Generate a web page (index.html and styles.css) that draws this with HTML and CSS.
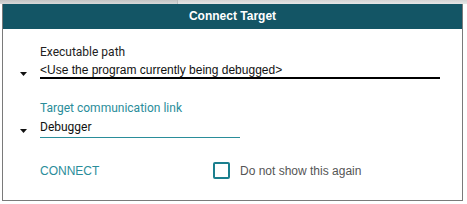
FILE: index.html
```html
<!DOCTYPE html>
<html>
<head>
<meta charset="utf-8">
<link rel="stylesheet" href="styles.css">
</head>
<body>
<div class="topstrip"><div class="tab-left"></div><div class="tab-right"></div></div>
<div class="dialog">
  <div class="header">Connect Target</div>
  <div class="content">
    <div class="field">
      <span></span>
      <div class="label">Executable path</div>
      <svg class="arrow" width="7" height="4" viewBox="0 0 7 4"><path d="M0 0H7L3.5 4Z" fill="#111"/></svg>
      <div class="input input-dark">&lt;Use the program currently being debugged&gt;</div>
    </div>
    <div class="field field2">
      <span></span>
      <div class="label label-teal">Target communication link</div>
      <svg class="arrow" width="7" height="4" viewBox="0 0 7 4"><path d="M0 0H7L3.5 4Z" fill="#111"/></svg>
      <div class="input input-teal">Debugger</div>
    </div>
    <div class="actions">
      <span class="connect">CONNECT</span>
      <span class="checkbox"></span>
      <span class="check-label">Do not show this again</span>
    </div>
  </div>
</div>
</body>
</html>
```
FILE: styles.css
```css
html, body {
  margin: 0;
  padding: 0;
  background: #ffffff;
}
body {
  width: 467px;
  height: 204px;
  overflow: hidden;
  font-family: "Liberation Sans", Arial, sans-serif;
  font-size: 12px;
}
.topstrip {
  height: 4px;
  display: flex;
}
.tab-left {
  width: 177px;
  background: linear-gradient(#c4c4c4, #d8d8d8);
  border-right: 1px solid #bdbdbd;
}
.tab-right {
  flex: 1;
  background: linear-gradient(#d4d4d4, #e6e6e6);
}
.dialog {
  margin-left: 2px;
  width: 459px;
  height: 196px;
  border: 1px solid #7a7a7a;
  border-top: none;
  background: #fff;
}
.header {
  height: 25px;
  background: #135565;
  color: #fff;
  text-align: center;
  line-height: 25px;
  font-size: 12px;
  font-weight: bold;
}
.content {
  padding: 16px 0 0 17px;
}
.field {
  display: grid;
  grid-template-columns: 20px auto;
  row-gap: 4px;
  width: 420px;
}
.field2 {
  width: 220px;
  margin-top: 22px;
  row-gap: 5px;
}
.label {
  font-family: Roboto, "Liberation Sans", sans-serif;
  line-height: 14px;
  color: #222;
}
.label-teal {
  color: #2a8d9a;
}
.arrow {
  display: block;
  margin-top: 9px;
}
.input {
  line-height: 14px;
  color: #111;
}
.input-dark {
  border-bottom: 2px solid #000;
}
.input-teal {
  font-family: Roboto, "Liberation Sans", sans-serif;
  border-bottom: 1px solid #2a8d9a;
  padding-bottom: 3px;
}
.actions {
  display: flex;
  align-items: center;
  margin-top: 24px;
  padding-left: 20px;
}
.connect {
  color: #2a8d9a;
  line-height: 14px;
  width: 173px;
}
.checkbox {
  box-sizing: border-box;
  width: 17px;
  height: 17px;
  border: 2px solid #1b7f8e;
  border-radius: 2px;
}
.check-label {
  margin-left: 10px;
  color: #555;
  line-height: 14px;
}
```
